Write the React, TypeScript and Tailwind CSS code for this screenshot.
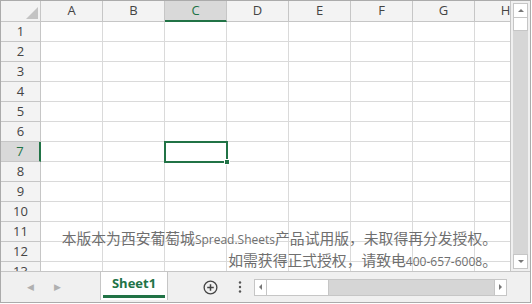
const cols = ["A", "B", "C", "D", "E", "F", "G", "H"];
const rows = Array.from({ length: 13 }, (_, i) => i + 1);

const font = "font-['Open_Sans','Liberation_Sans',sans-serif]";
const cjk = "font-['Noto_Sans_CJK_SC','Noto_Sans',sans-serif]";

function Corner() {
  return (
    <div className="relative bg-[#f3f3f3] border-r border-b border-[#c6c6c6]">
      <svg className="absolute right-[2px] bottom-[2px]" width="12" height="12" viewBox="0 0 12 12">
        <polygon points="12,0 12,12 0,12" fill="#c4c4c4" />
      </svg>
    </div>
  );
}

function ColHeader({ label }: { label: string }) {
  const active = label === "C";
  return (
    <div
      className={
        active
          ? "flex items-center justify-center bg-[#d9d9d9] border-r border-[#c6c6c6] border-b-2 border-b-[#217346] text-[#217346] text-[13px]"
          : "flex items-center justify-center bg-[#f3f3f3] border-r border-b border-[#c6c6c6] text-[#444] text-[13px]"
      }
    >
      {label}
    </div>
  );
}

function RowHeader({ n }: { n: number }) {
  const active = n === 7;
  return (
    <div
      className={
        active
          ? "flex items-center justify-center bg-[#d9d9d9] border-b border-[#c6c6c6] border-r-2 border-r-[#217346] text-[#217346] text-[13px]"
          : "flex items-center justify-center bg-[#f3f3f3] border-r border-b border-[#c6c6c6] text-[#444] text-[13px]"
      }
    >
      {n}
    </div>
  );
}

function ArrowBtn({ dir, className }: { dir: "up" | "down" | "left" | "right"; className: string }) {
  const pts = {
    up: "1,5 4,2 7,5",
    down: "1,2 4,5 7,2",
    left: "5,1 2,4 5,7",
    right: "2,1 5,4 2,7",
  }[dir];
  return (
    <div className={"flex items-center justify-center bg-white border border-[#c6c6c6] " + className}>
      <svg width="8" height="8" viewBox="0 0 8 8">
        <polygon points={pts} fill="#777" />
      </svg>
    </div>
  );
}

export default function App() {
  return (
    <div className={"w-[532px] h-[304px] bg-white " + font}>
      <div className="flex flex-col w-[531px] h-[303px] border border-[#ababab] overflow-hidden">
        <div className="flex h-[271px] border-b border-[#c6c6c6]">
          <div className="relative w-[509px] overflow-hidden">
            <div className="grid grid-cols-[40px_repeat(8,62px)] grid-rows-[21px_repeat(13,20px)]">
              <Corner />
              {cols.map((c) => (
                <ColHeader key={c} label={c} />
              ))}
              {rows.map((r) => (
                <>
                  <RowHeader key={"h" + r} n={r} />
                  {cols.map((c) => (
                    <div key={c + r} className="border-r border-b border-[#dadada] bg-white" />
                  ))}
                </>
              ))}
            </div>

            {/* active cell C7 */}
            <div className="absolute left-[163px] top-[140px] w-[64px] h-[22px] border-2 border-[#217346]">
              <div className="absolute right-[-4px] bottom-[-4px] w-[6px] h-[6px] bg-[#217346] border border-white" />
            </div>

            {/* trial watermark */}
            <div className="absolute right-[13px] top-[227px] flex flex-col items-end text-[#6f6f6f] leading-[20px]">
              <div className="whitespace-nowrap">
                <span className={cjk + " text-[14.8px]"}>本版本为西安葡萄城</span>
                <span className="text-[12px]">Spread.Sheets</span>
                <span className={cjk + " text-[14.8px]"}>产品试用版，未取得再分发授权。</span>
              </div>
              <div className="whitespace-nowrap">
                <span className={cjk + " text-[14.8px]"}>如需获得正式授权，请致电</span>
                <span className="text-[12px]">400-657-6008</span>
                <span className={cjk + " text-[14.8px]"}>。</span>
              </div>
            </div>
          </div>

          {/* vertical scrollbar */}
          <div className="flex-1 bg-[#f0f0f0] border-l border-[#c6c6c6] px-[2px] py-[2px]">
            <div className="flex flex-col h-full bg-[#d6d6d6]">
              <ArrowBtn dir="up" className="h-[15px]" />
              <div className="h-[13px] bg-white border-x border-b border-[#c6c6c6]" />
              <div className="flex-1" />
              <ArrowBtn dir="down" className="h-[15px]" />
            </div>
          </div>
        </div>

        {/* sheet tab bar */}
        <div className="flex items-stretch h-[30px] bg-[#f0f0f0]">
          <div className="flex items-center w-[99px] pl-[26px] gap-[20px] text-[#b0b0b0] text-[9px]">
            <span>◀</span>
            <span>▶</span>
          </div>
          <div className="flex flex-col items-center w-[68px] mb-[2px] bg-white border-x border-[#c6c6c6]">
            <div className="flex-1 flex items-center text-[#217346] font-bold text-[13px]">Sheet1</div>
            <div className="w-[62px] h-[3px] bg-[#217346] mb-[2px]" />
          </div>
          <div className="flex items-center w-[86px] gap-[20px] pl-[35px]">
            <svg width="15" height="15" viewBox="0 0 16 16">
              <circle cx="8" cy="8" r="6.8" fill="none" stroke="#444" strokeWidth="1.4" />
              <path d="M8 4.5v7M4.5 8h7" stroke="#444" strokeWidth="1.6" />
            </svg>
            <svg width="4" height="14" viewBox="0 0 4 14">
              <circle cx="2" cy="2.5" r="1.2" fill="#555" />
              <circle cx="2" cy="7" r="1.2" fill="#555" />
              <circle cx="2" cy="11.5" r="1.2" fill="#555" />
            </svg>
          </div>
          <div className="flex items-center w-[254px]">
            <div className="flex w-[253px] h-[17px] bg-[#d6d6d6] border border-[#c6c6c6]">
              <ArrowBtn dir="left" className="w-[12px] border-y-0 border-l-0" />
              <div className="w-[62px] bg-white border-r border-[#c6c6c6]" />
              <div className="flex-1" />
              <ArrowBtn dir="right" className="w-[12px] border-y-0 border-r-0" />
            </div>
          </div>
        </div>
      </div>
    </div>
  );
}
